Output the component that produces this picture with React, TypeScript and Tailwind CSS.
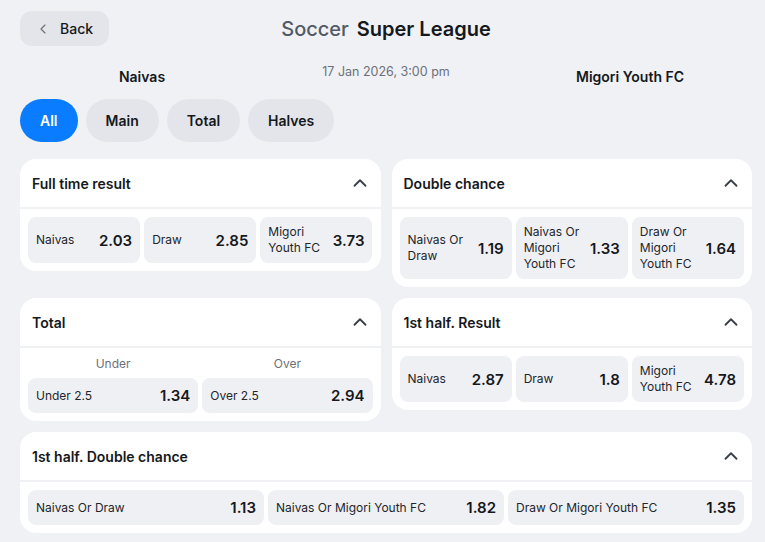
import { ChevronLeft, ChevronUp } from 'lucide-react'

type Odd = { label: string; value: string }

function OddButton({ label, value }: Odd) {
  return (
    <button className="flex min-h-[35px] items-center justify-between gap-2 rounded-lg bg-[#eff0f4] py-[7px] pl-2 pr-2 text-left">
      <span className="text-[12px] leading-4 text-[#22262c]">{label}</span>
      <span className="text-[15px] font-semibold leading-[19px] text-[#15181c]">{value}</span>
    </button>
  )
}

function Card({
  title,
  children,
  className = '',
}: {
  title: string
  children: React.ReactNode
  className?: string
}) {
  return (
    <div className={`rounded-2xl bg-white ${className}`}>
      <div className="flex h-[50px] items-center justify-between border-b-2 border-[#f0f1f5] pl-3 pr-2.5">
        <span className="text-[14px] font-semibold text-[#15181c]">{title}</span>
        <ChevronUp size={22} strokeWidth={2} className="text-[#3b4048]" />
      </div>
      <div className="p-2">{children}</div>
    </div>
  )
}

function OddsRow({ odds, cols }: { odds: Odd[]; cols: string }) {
  return (
    <div className={`grid gap-1 ${cols}`}>
      {odds.map((o) => (
        <OddButton key={o.label} {...o} />
      ))}
    </div>
  )
}

const tabs = ['All', 'Main', 'Total', 'Halves']

export default function App() {
  return (
    <div
      className="min-h-screen bg-[#f0f1f5] pb-4 pl-5 pr-[13px] pt-[11px]"
      style={{ fontFamily: 'Inter, "Noto Sans", sans-serif' }}
    >
      {/* header */}
      <div className="grid grid-cols-[1fr_auto_1fr] items-center">
        <div>
          <button className="flex h-[35px] w-[89px] items-center gap-[9px] rounded-xl bg-[#e3e5ea] pl-[15px] text-[14px] font-medium text-[#15181c]">
            <ChevronLeft size={16} strokeWidth={1.75} className="text-[#6b7079]" />
            Back
          </button>
        </div>
        <h1 className="flex gap-2 text-[20px] leading-7">
          <span className="font-medium text-[#525a66]">Soccer</span>
          <span className="font-semibold text-[#15181c]">Super League</span>
        </h1>
        <div />
      </div>

      {/* teams */}
      <div className="mt-3 grid grid-cols-3 items-center">
        <div className="mt-2 text-center text-[14px] font-semibold text-[#15181c]">Naivas</div>
        <div className="text-center text-[12.5px] text-[#6b7079]">17 Jan 2026, 3:00 pm</div>
        <div className="mt-2 text-center text-[14px] font-semibold text-[#15181c]">Migori Youth FC</div>
      </div>

      {/* tabs */}
      <div className="mt-3 flex gap-2">
        {tabs.map((t, i) => (
          <button
            key={t}
            className={`h-[43px] rounded-full px-5 text-[14px] font-semibold ${
              i === 0 ? 'bg-[#0a7cff] text-white' : 'bg-[#e3e5ea] text-[#15181c]'
            }`}
          >
            {t}
          </button>
        ))}
      </div>

      {/* markets */}
      <div className="mt-[17px] grid grid-cols-2 items-start gap-[11px]">
        <Card title="Full time result">
          <OddsRow
            cols="grid-cols-3"
            odds={[
              { label: 'Naivas', value: '2.03' },
              { label: 'Draw', value: '2.85' },
              { label: 'Migori Youth FC', value: '3.73' },
            ]}
          />
        </Card>
        <Card title="Double chance">
          <OddsRow
            cols="grid-cols-3"
            odds={[
              { label: 'Naivas Or Draw', value: '1.19' },
              { label: 'Naivas Or Migori Youth FC', value: '1.33' },
              { label: 'Draw Or Migori Youth FC', value: '1.64' },
            ]}
          />
        </Card>
        <Card title="Total">
          <div className="mb-1.5 grid grid-cols-2 gap-1 text-center text-[12px] leading-4 text-[#6b7079]">
            <span>Under</span>
            <span>Over</span>
          </div>
          <OddsRow
            cols="grid-cols-2"
            odds={[
              { label: 'Under 2.5', value: '1.34' },
              { label: 'Over 2.5', value: '2.94' },
            ]}
          />
        </Card>
        <Card title="1st half. Result">
          <OddsRow
            cols="grid-cols-3"
            odds={[
              { label: 'Naivas', value: '2.87' },
              { label: 'Draw', value: '1.8' },
              { label: 'Migori Youth FC', value: '4.78' },
            ]}
          />
        </Card>
        <Card title="1st half. Double chance" className="col-span-2">
          <OddsRow
            cols="grid-cols-3"
            odds={[
              { label: 'Naivas Or Draw', value: '1.13' },
              { label: 'Naivas Or Migori Youth FC', value: '1.82' },
              { label: 'Draw Or Migori Youth FC', value: '1.35' },
            ]}
          />
        </Card>
      </div>
    </div>
  )
}
